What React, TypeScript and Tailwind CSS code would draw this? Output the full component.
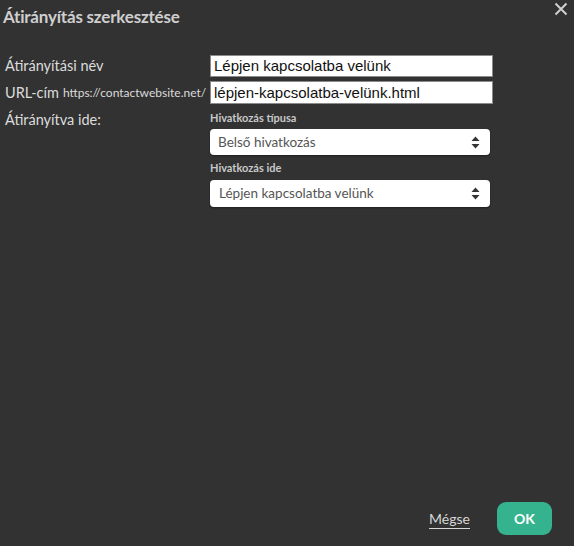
import React from "react";

function Arrows() {
  return (
    <svg width="9" height="13" viewBox="0 0 9 13" className="shrink-0">
      <path d="M4.5 0.5 L8.5 5 L0.5 5 Z" fill="#333" />
      <path d="M4.5 12.5 L8.5 8 L0.5 8 Z" fill="#333" />
    </svg>
  );
}

export default function App() {
  const lato = { fontFamily: "Lato, 'Noto Sans', sans-serif" };
  return (
    <div className="w-[574px] h-[546px] bg-[#323232] relative flex flex-col" style={lato}>
      <div className="flex items-start justify-between h-[50px]">
        <h1 className="text-[17px] font-bold text-[#cfcfcf] pl-[3px] pt-[6px] leading-[22px] tracking-[-0.2px]">Átirányítás szerkesztése</h1>
        <svg width="14" height="14" viewBox="0 0 14 14" className="mt-[2px] mr-[6px]">
          <path d="M1.5 1.5 L12.5 12.5 M12.5 1.5 L1.5 12.5" stroke="#d0d0d0" strokeWidth="2" />
        </svg>
      </div>
      <div className="grid grid-cols-[210px_283px] gap-y-[4px] pl-0 mt-[5px]">
        <div className="pl-[5px] text-[14.5px] text-[#dcdcdc] leading-[22px] flex items-center">Átirányítási név</div>
        <input
          readOnly
          value="Lépjen kapcsolatba velünk"
          className="h-[22px] bg-white border border-[#8a8a8a] px-[3px] text-[15px] text-[#111] outline-none"
          style={{ fontFamily: "'Liberation Sans', Arial, sans-serif" }}
        />
        <div className="pl-[5px] text-[14.5px] text-[#dcdcdc] leading-[23px] flex items-center whitespace-nowrap">
          URL-cím <span className="text-[12px] ml-[4px]">https://contactwebsite.net/</span>
        </div>
        <input
          readOnly
          value="lépjen-kapcsolatba-velünk.html"
          className="h-[23px] bg-white border border-[#8a8a8a] px-[3px] text-[15px] text-[#111] outline-none"
          style={{ fontFamily: "'Liberation Sans', Arial, sans-serif" }}
        />
        <div className="pl-[5px] text-[14.5px] text-[#dcdcdc] leading-[20px] pt-[2px]">Átirányítva ide:</div>
        <div className="flex flex-col w-[280px] pt-[3px]">
          <div className="text-[11px] font-bold text-[#c8c8c8] leading-[14px] mb-[4px]">Hivatkozás típusa</div>
          <div className="h-[26px] bg-white rounded-[4px] shadow-[0_1px_2px_rgba(0,0,0,0.4)] flex items-center justify-between pl-[8px] pr-[10px] text-[13.5px] text-[#555]">
            <span>Belső hivatkozás</span>
            <Arrows />
          </div>
          <div className="text-[11px] font-bold text-[#c8c8c8] leading-[14px] mt-[6px] mb-[5px]">Hivatkozás ide</div>
          <div className="h-[27px] bg-white rounded-[4px] shadow-[0_1px_2px_rgba(0,0,0,0.4)] flex items-center justify-between pl-[9px] pr-[10px] text-[13.5px] text-[#555]">
            <span>Lépjen kapcsolatba velünk</span>
            <Arrows />
          </div>
        </div>
      </div>
      <div className="flex-1" />
      <div className="flex items-center justify-end gap-[27px] pr-[22px] pb-[11px]">
        <span className="text-[14px] text-[#d6d6d6] underline underline-offset-[4px] decoration-[#d6d6d6]">Mégse</span>
        <button className="w-[55px] h-[33px] rounded-[9px] bg-[#35b38e] text-white font-bold text-[14px]">OK</button>
      </div>
    </div>
  );
}
